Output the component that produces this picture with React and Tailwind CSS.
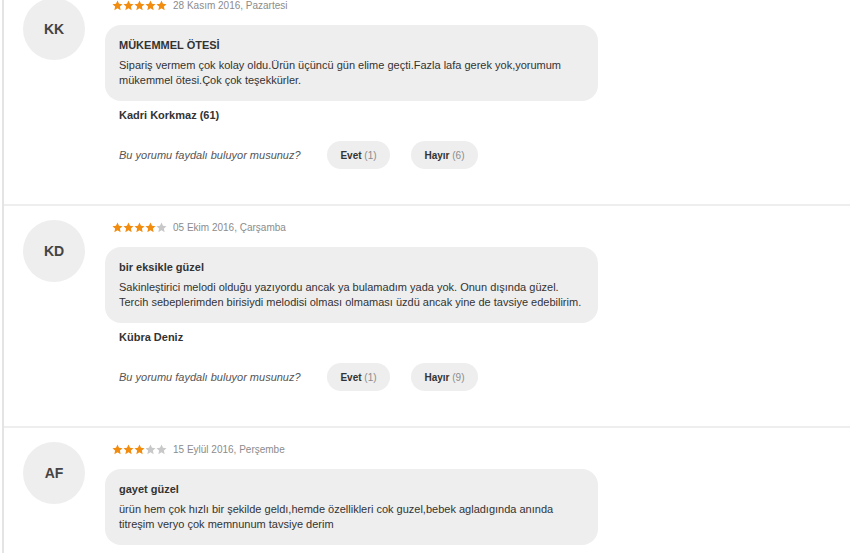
import React from 'react';

const reviews = [
    {
        initials: 'KK',
        rating: 5,
        date: '28 Kasım 2016, Pazartesi',
        title: 'MÜKEMMEL ÖTESİ',
        text: 'Sipariş vermem çok kolay oldu.Ürün üçüncü gün elime geçti.Fazla lafa gerek yok,yorumum mükemmel ötesi.Çok çok teşekkürler.',
        name: 'Kadri Korkmaz (61)',
        yes: 1,
        no: 6,
    },
    {
        initials: 'KD',
        rating: 4,
        date: '05 Ekim 2016, Çarşamba',
        title: 'bir eksikle güzel',
        text: 'Sakinleştirici melodi olduğu yazıyordu ancak ya bulamadım yada yok. Onun dışında güzel. Tercih sebeplerimden birisiydi melodisi olması olmaması üzdü ancak yine de tavsiye edebilirim.',
        name: 'Kübra Deniz',
        yes: 1,
        no: 9,
    },
    {
        initials: 'AF',
        rating: 3,
        date: '15 Eylül 2016, Perşembe',
        title: 'gayet güzel',
        text: 'ürün hem çok hızlı bir şekilde geldı,hemde özellikleri cok guzel,bebek agladıgında anında titreşim veryo çok memnunum tavsiye derim',
        name: 'Ayşe Fidan',
        yes: 0,
        no: 0,
    },
];

function Star({ filled }) {
    return (
        <svg width="11" height="11" viewBox="0 0 24 24" className={filled ? 'fill-[#f28c0f]' : 'fill-[#c8c8c8]'}>
            <path d="M12 1l3.3 7.3 7.7.8-5.8 5.3 1.7 7.8L12 18.2l-6.9 4 1.7-7.8L1 9.1l7.7-.8z" />
        </svg>
    );
}

function Review({ review, first }) {
    return (
        <div className={`flex gap-5 pl-[19px] pb-[35px] ${first ? 'pt-0' : 'pt-[14px] border-t-2 border-[#eeeeee]'}`}>
            <div className="w-[62px] h-[62px] shrink-0 rounded-full bg-[#eeeeee] flex items-center justify-center text-[14px] font-bold text-[#444]">
                {review.initials}
            </div>
            <div className="w-[493px]">
                <div className="h-[15px] pl-[7px] flex items-center">
                    <div className="flex">
                        {[1, 2, 3, 4, 5].map((i) => (
                            <Star key={i} filled={i <= review.rating} />
                        ))}
                    </div>
                    <span className="ml-[6px] text-[10px] text-[#8c8c8c]">{review.date}</span>
                </div>
                <div className="mt-3 rounded-[16px] bg-[#eeeeee] pl-[14px] pr-[10px] pt-[13px] pb-[13px] text-[11px] leading-[15px] text-[#333]">
                    <p className="font-bold">{review.title}</p>
                    <p className="mt-[5px]">{review.text}</p>
                </div>
                <p className="mt-[7px] pl-[14px] text-[11px] leading-[15px] font-bold text-[#333]">{review.name}</p>
                <div className="mt-[18px] pl-[14px] flex items-center">
                    <span className="w-[208px] text-[11px] italic text-[#555]">Bu yorumu faydalı buluyor musunuz?</span>
                    <button className="h-[28px] w-[63px] rounded-full bg-[#eeeeee] text-[10px] text-[#333]">
                        <span className="font-bold">Evet</span> <span className="text-[#8c8c8c]">({review.yes})</span>
                    </button>
                    <button className="ml-[21px] h-[28px] w-[67px] rounded-full bg-[#eeeeee] text-[10px] text-[#333]">
                        <span className="font-bold">Hayır</span> <span className="text-[#8c8c8c]">({review.no})</span>
                    </button>
                </div>
            </div>
        </div>
    );
}

export default function App() {
    return (
        <div className="w-[850px] h-[555px] overflow-hidden bg-white pl-[2px] font-['Liberation_Sans',Arial,sans-serif]">
            <div className="h-full border-l-2 border-[#e4e4e4]">
                <div className="-mt-[2px]">
                    {reviews.map((r, i) => (
                        <Review key={r.initials} review={r} first={i === 0} />
                    ))}
                </div>
            </div>
        </div>
    );
}
